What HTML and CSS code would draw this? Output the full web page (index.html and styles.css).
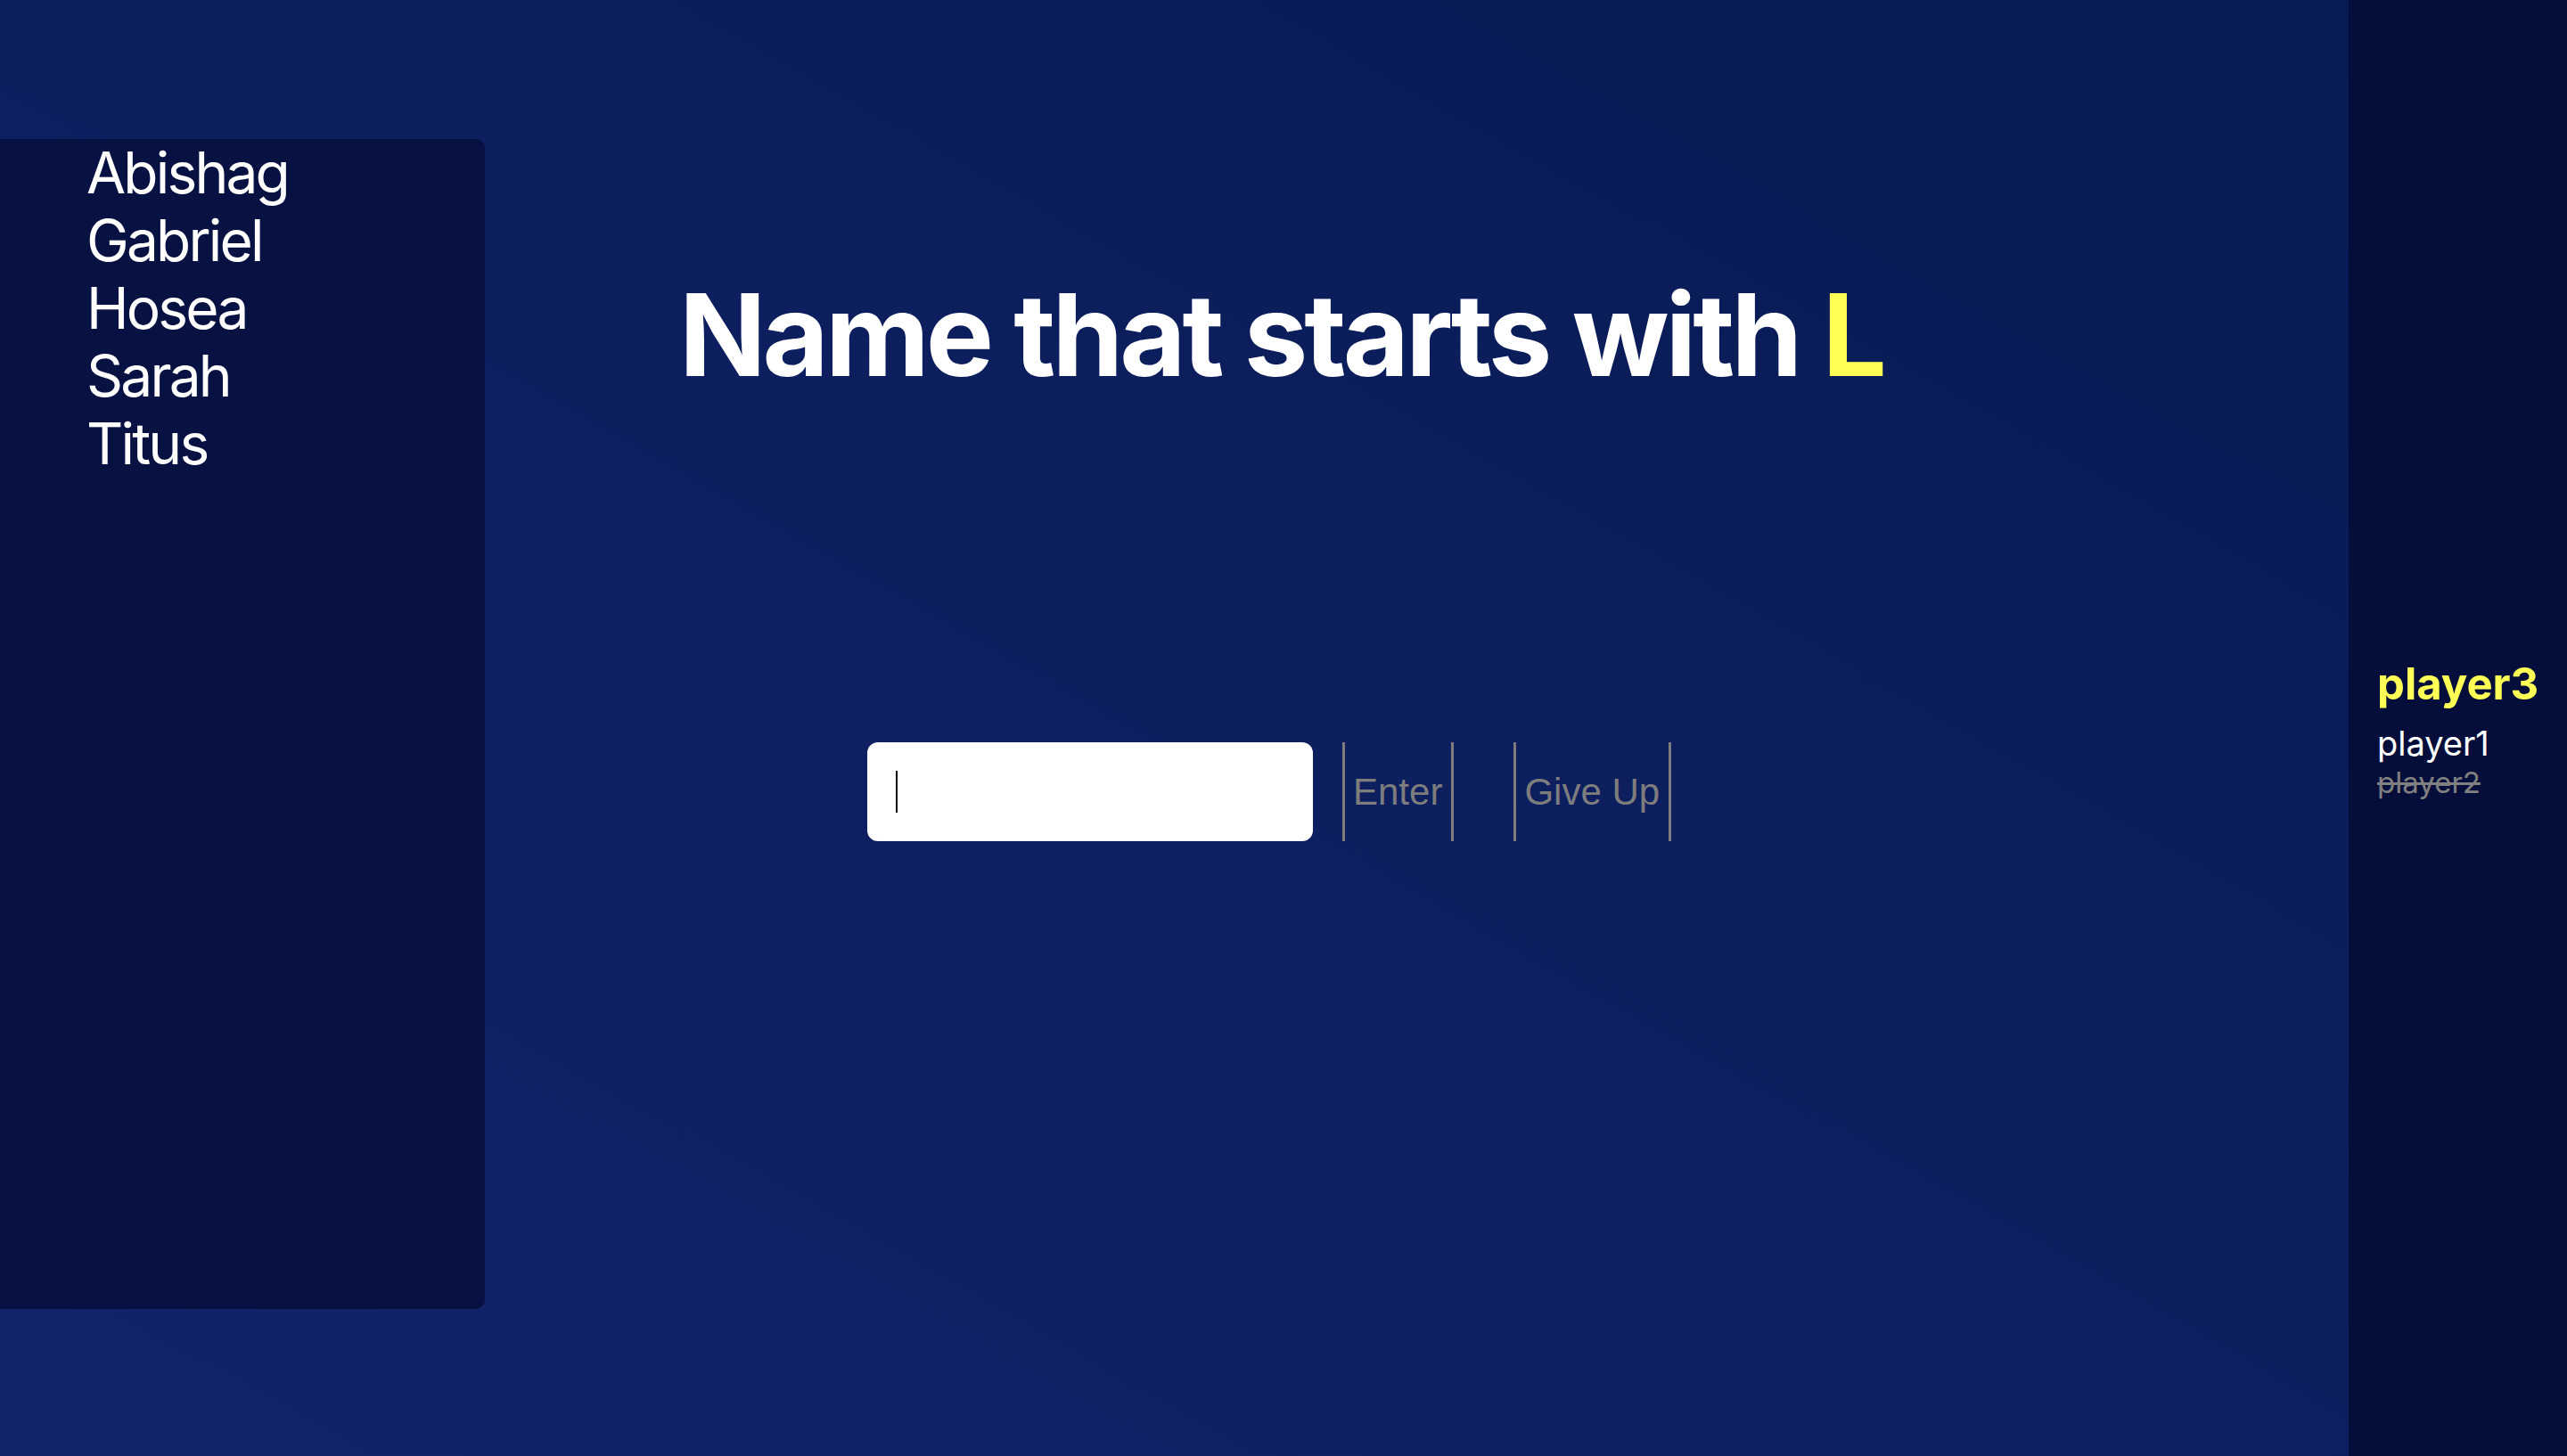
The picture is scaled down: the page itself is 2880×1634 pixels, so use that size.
FILE: index.html
```html
<!DOCTYPE html>
<html lang="en">
<head>
<meta charset="utf-8">
<title>Name game</title>
<link rel="stylesheet" href="styles.css">
</head>
<body>
<div class="app">
  <aside class="answers">
    <ul class="answer-list">
      <li>Abishag</li>
      <li>Gabriel</li>
      <li>Hosea</li>
      <li>Sarah</li>
      <li>Titus</li>
    </ul>
  </aside>
  <main class="game">
    <h1 class="prompt">Name that starts with <span class="letter">L</span></h1>
    <form class="guess-row">
      <div class="field">
        <input class="guess-input" type="text" aria-label="Your answer">
        <span class="caret"></span>
      </div>
      <button class="btn btn-enter" type="button">Enter</button>
      <button class="btn btn-giveup" type="button">Give Up</button>
    </form>
  </main>
  <aside class="players">
    <ul class="player-list">
      <li class="player current">player3</li>
      <li class="player">player1</li>
      <li class="player out">player2</li>
    </ul>
  </aside>
</div>
</body>
</html>
```
FILE: styles.css
```css
* { box-sizing: border-box; }
html, body { margin: 0; padding: 0; height: 100%; }
body {
  font-family: Inter, "Noto Sans", sans-serif;
  background: linear-gradient(to top right, #11246c 0%, #0d1f5f 50%, #071a50 100%);
  color: #fff;
}
.app {
  display: flex;
  height: 1634px;
  width: 2880px;
}
.answers {
  align-self: center;
  width: 544px;
  height: 1313px;
  margin-top: -10px;
  background: #071142;
  border-radius: 0 10px 10px 0;
  flex-shrink: 0;
}
.answer-list {
  list-style: none;
  margin: 0;
  padding: 0 0 0 97px;
}
.answer-list li {
  font-size: 64px;
  line-height: 76px;
  letter-spacing: -2.8px;
}
.game {
  flex: 1;
  display: flex;
  flex-direction: column;
  align-items: flex-start;
  padding: 298px 0 0 218px;
}
.prompt {
  margin: 0;
  font-size: 128px;
  font-weight: 700;
  line-height: 155px;
  letter-spacing: -4px;
}
.letter { color: #ffff55; }
.guess-row {
  display: flex;
  align-items: stretch;
  margin: 380px 0 0 211px;
  height: 111px;
}
.field {
  position: relative;
  width: 500px;
  height: 111px;
}
.guess-input {
  width: 100%;
  height: 100%;
  border: none;
  border-radius: 12px;
  background: #fff;
  padding: 0 32px;
  font-size: 40px;
  font-family: Inter, sans-serif;
  outline: none;
}
.caret {
  position: absolute;
  left: 32px;
  top: 32px;
  width: 2px;
  height: 47px;
  background: #000;
}
.btn {
  background: transparent;
  border: none;
  border-left: 3px solid #7d7d7d;
  border-right: 3px solid #7d7d7d;
  color: #7d7d7d;
  font-family: "Liberation Sans", Arial, sans-serif;
  font-size: 42px;
  padding: 0 10px 0 9px;
  height: 111px;
  cursor: pointer;
}
.btn-enter { margin-left: 33px; }
.btn-giveup { margin-left: 67px; }
.players {
  width: 245px;
  flex-shrink: 0;
  background: #050e3a;
  display: flex;
  flex-direction: column;
  justify-content: center;
  padding: 4px 0 0 32px;
}
.player-list {
  list-style: none;
  margin: 0;
  padding: 0;
}
.player {
  font-size: 38px;
  line-height: 44px;
}
.player.current {
  color: #ffff55;
  font-weight: 700;
  font-size: 49px;
  line-height: 60px;
  margin-bottom: 14px;
}
.player.out {
  color: #808080;
  font-size: 33px;
  text-decoration: line-through;
}
```
